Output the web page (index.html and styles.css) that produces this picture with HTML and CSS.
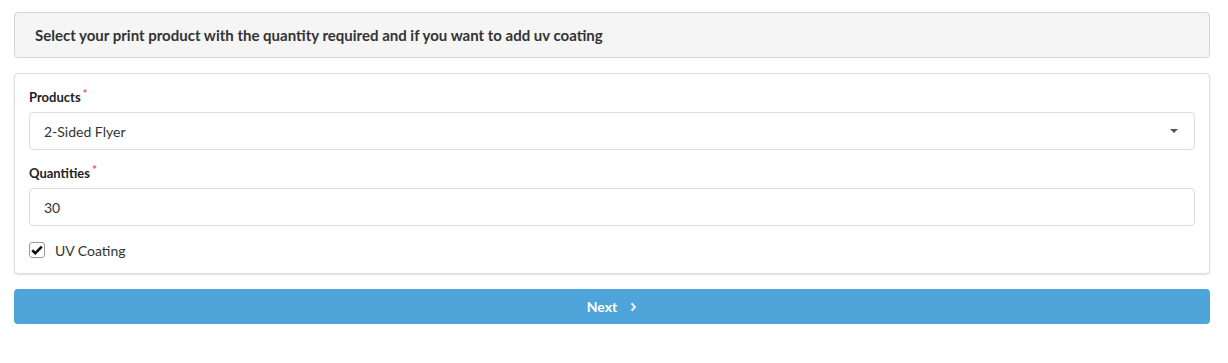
FILE: index.html
```html
<!DOCTYPE html>
<html lang="en">
<head>
    <meta charset="UTF-8">
    <meta name="viewport" content="width=device-width, initial-scale=1.0">
    <title>Print Product</title>
    <link rel="stylesheet" href="styles.css">
</head>
<body>

    <div class="wrapper">
        <div class="intro">
            Select your print product with the quantity required and if you want to add uv coating
        </div>

        <div class="card">
            <div class="field">
                <label class="label">Products<span class="req">*</span></label>
                <div class="select">
                    <span>2-Sided Flyer</span>
                    <span class="caret"></span>
                </div>
            </div>

            <div class="field">
                <label class="label">Quantities<span class="req">*</span></label>
                <div class="input">30</div>
            </div>

            <div class="check-row">
                <span class="checkbox">
                    <svg width="12" height="10" viewBox="0 0 12 10">
                        <path d="M1.2 5.2 L4.3 8.2 L10.8 1.6" fill="none" stroke="#111" stroke-width="2.6"/>
                    </svg>
                </span>
                <span class="check-text">UV Coating</span>
            </div>
        </div>

        <button class="next">Next <span class="chev">
            <svg width="7" height="10" viewBox="0 0 7 10">
                <path d="M1.5 1.2 L5 5 L1.5 8.8" fill="none" stroke="#e6f2fa" stroke-width="2"/>
            </svg>
        </span></button>
    </div>

</body>
</html>
```

FILE: styles.css
```css
body {
    margin: 0;
    font-family: Lato, "Open Sans", sans-serif;
    color: #333;
    background: #fff;
}
.wrapper {
    padding: 12px 18px 0 14px;
    display: flex;
    flex-direction: column;
    gap: 15px;
}
.intro {
    height: 44px;
    border: 1px solid #d4d4d4;
    border-radius: 4px;
    background: #f5f5f5;
    padding: 0 20px;
    display: flex;
    align-items: center;
    font-size: 15px;
    font-weight: 700;
    color: #333;
}
.card {
    border: 1px solid #ddd;
    border-radius: 4px;
    box-shadow: 0 1px 2px rgba(0, 0, 0, 0.12);
    padding: 14px 14px 11px 14px;
    display: flex;
    flex-direction: column;
}
.field {
    display: flex;
    flex-direction: column;
    margin-bottom: 14px;
}
.label {
    font-size: 13px;
    font-weight: 700;
    color: #222;
    line-height: 18px;
    margin-bottom: 6px;
}
.req {
    color: #e05a5a;
    font-size: 12px;
    vertical-align: top;
    margin-left: 2px;
    position: relative;
    top: -3px;
}
.select, .input {
    height: 36px;
    border: 1px solid #ddd;
    border-radius: 4px;
    padding: 0 14px;
    display: flex;
    align-items: center;
    justify-content: space-between;
    font-size: 14px;
    color: #333;
}
.caret {
    width: 0;
    height: 0;
    border-left: 4px solid transparent;
    border-right: 4px solid transparent;
    border-top: 4px solid #555;
    margin-right: 2px;
}
.check-row {
    display: flex;
    align-items: center;
    gap: 10px;
    margin-top: -2px;
    height: 24px;
}
.checkbox {
    width: 14px;
    height: 14px;
    border: 1px solid #999;
    border-radius: 3px;
    display: flex;
    align-items: center;
    justify-content: center;
}
.check-text {
    font-size: 14px;
    color: #333;
}
.next {
    height: 35px;
    border: none;
    border-radius: 4px;
    background: #4fa5da;
    color: #fff;
    font-family: Lato, "Open Sans", sans-serif;
    font-size: 14px;
    font-weight: 700;
    display: flex;
    align-items: center;
    justify-content: center;
    gap: 13px;
    padding: 0;
}
.chev {
    display: flex;
}
```
